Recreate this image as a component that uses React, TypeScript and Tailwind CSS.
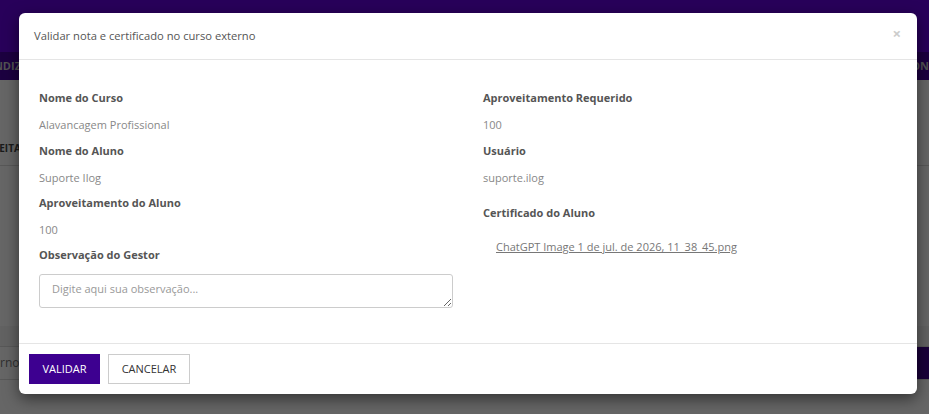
import React from 'react';

const fieldsLeft = [
  { label: 'Nome do Curso', value: 'Alavancagem Profissional' },
  { label: 'Nome do Aluno', value: 'Suporte Ilog' },
  { label: 'Aproveitamento do Aluno', value: '100' },
];

const fieldsRight = [
  { label: 'Aproveitamento Requerido', value: '100' },
  { label: 'Usuário', value: 'suporte.ilog' },
];

const Field: React.FC<{ label: string; value: string; first?: boolean }> = ({ label, value, first }) => (
  <div className={first ? 'pb-[1px]' : ''}>
    <div className="h-[26px] leading-[26px] text-[11px] font-bold text-[#555]">{label}</div>
    <div className="h-[27px] leading-[28px] text-[11px] text-[#888]">{value}</div>
  </div>
);

const App: React.FC = () => {
  return (
    <div
      className="relative h-[414px] w-[929px] overflow-hidden bg-white"
      style={{ fontFamily: '"Open Sans", "Noto Sans", sans-serif' }}
    >
      {/* pagina de fundo */}
      <div className="h-[52px] bg-[#6400e1]" />
      <div className="flex h-[28px] items-center justify-between bg-[#4600a0] text-[11px] font-bold text-[#ccc]">
        <span className="-ml-[34px]">APRENDIZ</span>
        <span className="-mr-[48px]">CONFIGURAR</span>
      </div>
      <div className="flex h-[86px] items-end border-b border-[#ddd] pb-[9px] text-[10px] font-bold text-[#444]">
        <span className="-ml-[14px]">ACEITAN</span>
      </div>
      <div className="h-[160px]" />
      <div className="h-[20px] bg-[#f4f4f4]" />
      <div className="flex h-[34px] items-center justify-between border-y border-[#ddd]">
        <span className="-ml-[58px] text-[12px] text-[#777]">curso externo</span>
        <div className="h-[32px] w-[40px] bg-[#400090]" />
      </div>

      {/* overlay */}
      <div className="absolute inset-0 bg-black/60" />

      {/* modal */}
      <div className="absolute left-[19px] top-[13px] w-[898px] rounded-[6px] bg-white shadow-[0_5px_15px_rgba(0,0,0,0.5)]">
        <div className="flex h-[47px] items-center justify-between border-b border-[#e5e5e5] pl-[15px] pr-[16px]">
          <h4 className="text-[11.2px] text-[#555]">Validar nota e certificado no curso externo</h4>
          <button className="-mt-[6px] text-[15px] font-bold leading-none text-[#ccc]">×</button>
        </div>

        <div className="grid grid-cols-2 gap-x-[30px] px-[20px] pb-[35px] pt-[25px]">
          <div>
            {fieldsLeft.map((f, i) => (
              <div key={f.label} className={i === 0 ? '' : '-mt-[1px]'}>
                <Field label={f.label} value={f.value} first={i === 0} />
              </div>
            ))}
            <div className="-mt-[1px] h-[26px] leading-[26px] text-[11px] font-bold text-[#555]">Observação do Gestor</div>
            <textarea
              rows={2}
              placeholder="Digite aqui sua observação..."
              className="mt-[6px] block h-[34px] w-full rounded-[3px] border border-[#ccc] px-[12px] py-[6px] text-[11px] text-[#555] outline-none placeholder:text-[#999]"
            />
          </div>
          <div>
            {fieldsRight.map((f, i) => (
              <div key={f.label} className={i === 0 ? '' : '-mt-[1px]'}>
                <Field label={f.label} value={f.value} first={i === 0} />
              </div>
            ))}
            <div className="mt-[9px] h-[26px] leading-[26px] text-[11px] font-bold text-[#555]">Certificado do Aluno</div>
            <div className="mt-[7px] pl-[13px] leading-[24px]">
              <a href="#" className="text-[11px] text-[#777] underline">
                ChatGPT Image 1 de jul. de 2026, 11_38_45.png
              </a>
            </div>
          </div>
        </div>

        <div className="flex gap-[8px] border-t border-[#e5e5e5] px-[10px] pb-[10px] pt-[10px]">
          <button className="h-[30px] w-[71px] bg-[#3d0090] text-[11px] text-white">VALIDAR</button>
          <button className="h-[30px] w-[82px] border border-[#ccc] bg-white text-[11px] text-[#333]">CANCELAR</button>
        </div>
      </div>
    </div>
  );
};

export default App;
